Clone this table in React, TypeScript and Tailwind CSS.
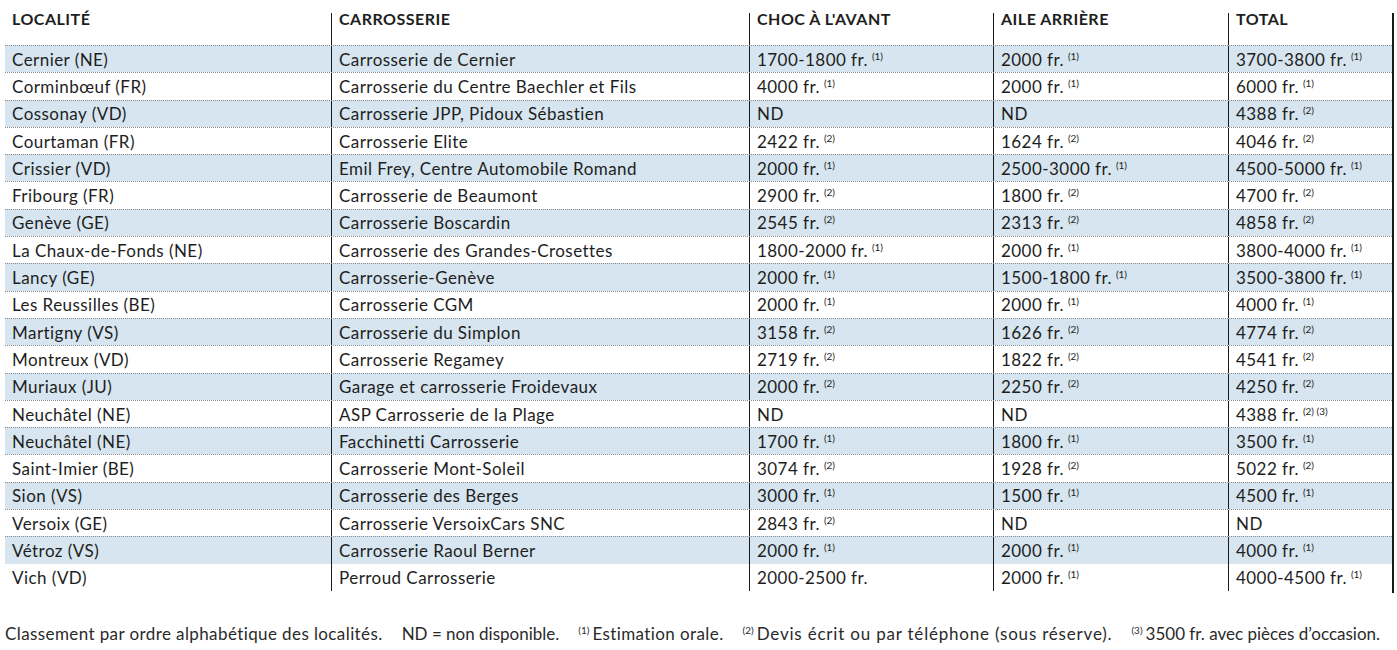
import React from "react";

const rows: string[][] = [
  ["Cernier (NE)", "Carrosserie de Cernier", "1700-1800 fr.|(1)", "2000 fr.|(1)", "3700-3800 fr.|(1)"],
  ["Corminbœuf (FR)", "Carrosserie du Centre Baechler et Fils", "4000 fr.|(1)", "2000 fr.|(1)", "6000 fr.|(1)"],
  ["Cossonay (VD)", "Carrosserie JPP, Pidoux Sébastien", "ND", "ND", "4388 fr.|(2)"],
  ["Courtaman (FR)", "Carrosserie Elite", "2422 fr.|(2)", "1624 fr.|(2)", "4046 fr.|(2)"],
  ["Crissier (VD)", "Emil Frey, Centre Automobile Romand", "2000 fr.|(1)", "2500-3000 fr.|(1)", "4500-5000 fr.|(1)"],
  ["Fribourg (FR)", "Carrosserie de Beaumont", "2900 fr.|(2)", "1800 fr.|(2)", "4700 fr.|(2)"],
  ["Genève (GE)", "Carrosserie Boscardin", "2545 fr.|(2)", "2313 fr.|(2)", "4858 fr.|(2)"],
  ["La Chaux-de-Fonds (NE)", "Carrosserie des Grandes-Crosettes", "1800-2000 fr.|(1)", "2000 fr.|(1)", "3800-4000 fr.|(1)"],
  ["Lancy (GE)", "Carrosserie-Genève", "2000 fr.|(1)", "1500-1800 fr.|(1)", "3500-3800 fr.|(1)"],
  ["Les Reussilles (BE)", "Carrosserie CGM", "2000 fr.|(1)", "2000 fr.|(1)", "4000 fr.|(1)"],
  ["Martigny (VS)", "Carrosserie du Simplon", "3158 fr.|(2)", "1626 fr.|(2)", "4774 fr.|(2)"],
  ["Montreux (VD)", "Carrosserie Regamey", "2719 fr.|(2)", "1822 fr.|(2)", "4541 fr.|(2)"],
  ["Muriaux (JU)", "Garage et carrosserie Froidevaux", "2000 fr.|(2)", "2250 fr.|(2)", "4250 fr.|(2)"],
  ["Neuchâtel (NE)", "ASP Carrosserie de la Plage", "ND", "ND", "4388 fr.|(2) (3)"],
  ["Neuchâtel (NE)", "Facchinetti Carrosserie", "1700 fr.|(1)", "1800 fr.|(1)", "3500 fr.|(1)"],
  ["Saint-Imier (BE)", "Carrosserie Mont-Soleil", "3074 fr.|(2)", "1928 fr.|(2)", "5022 fr.|(2)"],
  ["Sion (VS)", "Carrosserie des Berges", "3000 fr.|(1)", "1500 fr.|(1)", "4500 fr.|(1)"],
  ["Versoix (GE)", "Carrosserie VersoixCars SNC", "2843 fr.|(2)", "ND", "ND"],
  ["Vétroz (VS)", "Carrosserie Raoul Berner", "2000 fr.|(1)", "2000 fr.|(1)", "4000 fr.|(1)"],
  ["Vich (VD)", "Perroud Carrosserie", "2000-2500 fr.", "2000 fr.|(1)", "4000-4500 fr.|(1)"],
];

const headers = ["Localité", "Carrosserie", "Choc à l'avant", "Aile arrière", "Total"];

function Price({ value }: { value: string }) {
  const [main, note] = value.split("|");
  return (
    <span>
      {main}
      {note && (
        <sup className="ml-[4px] text-[10px] tracking-normal top-[-0.6em]">{note}</sup>
      )}
    </span>
  );
}

export default function App() {
  return (
    <div className="w-[1397px] h-[650px] bg-white text-[#1e1e1e] font-['Lato',sans-serif]">
      {/* TABLE */}
      <div className="ml-[5px] mt-[13px] w-[1389px] border-r-2 border-[#1a1a1a] pb-[2px]">
        {/* HEADER */}
        <div className="grid grid-cols-[326px_418px_244px_235px_1fr] h-[32px]">
          {headers.map((h, i) => (
            <div
              key={h}
              className={`pl-[7px] text-[16px] font-bold uppercase tracking-[0.5px] leading-[11px] ${
                i > 0 ? "border-l-[1.5px] border-[#1a1a1a]" : ""
              }`}
            >
              {h}
            </div>
          ))}
        </div>

        {/* ROWS */}
        {rows.map((r, idx) => (
          <div
            key={idx}
            className={`grid grid-cols-[326px_418px_244px_235px_1fr] h-[27.3px] ${
              idx % 2 === 0 ? "bg-[#d6e5ef]" : "bg-white"
            } ${idx < rows.length - 1 ? "border-t border-dotted border-[#8a8a8a]" : ""}`}
          >
            {r.map((c, i) => (
              <div
                key={i}
                className={`pl-[7px] flex items-center text-[17px] tracking-[0.45px] leading-none whitespace-nowrap ${
                  i > 0 ? "border-l-[1.5px] border-[#1a1a1a]" : ""
                }`}
              >
                {i < 2 ? c : <Price value={c} />}
              </div>
            ))}
          </div>
        ))}
      </div>

      {/* FOOTER */}
      <div className="mt-[31px] ml-[5px] flex gap-[19px] text-[17px] tracking-[0.4px] leading-[20px] text-[#2a2a2a] whitespace-nowrap">
        <span>Classement par ordre alphabétique des localités.</span>
        <span className="tracking-[0px]">ND = non disponible.</span>
        <span>
          <sup className="text-[10px] tracking-normal top-[-0.6em] mr-[3px]">(1)</sup>Estimation orale.
        </span>
        <span className="tracking-[0.8px]">
          <sup className="text-[10px] tracking-normal top-[-0.6em] mr-[3px]">(2)</sup>Devis écrit ou par téléphone (sous réserve).
        </span>
        <span className="tracking-[0px]">
          <sup className="text-[10px] tracking-normal top-[-0.6em] mr-[3px]">(3)</sup>3500 fr. avec pièces d’occasion.
        </span>
      </div>
    </div>
  );
}
